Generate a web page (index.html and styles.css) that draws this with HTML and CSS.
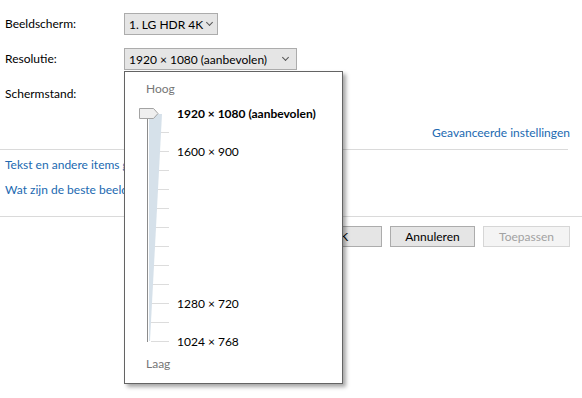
FILE: index.html
```html
<!DOCTYPE html>
<html lang="nl">
<head>
  <meta charset="UTF-8">
  <title>Schermresolutie</title>
  <link rel="stylesheet" href="styles.css">
</head>
<body>
  <div class="panel">
    <div class="settings">
      <label class="field-label">Beeldscherm:</label>
      <div class="combo combo-display"><span>1. LG HDR 4K</span><i class="chev"></i></div>

      <label class="field-label">Resolutie:</label>
      <div class="combo combo-res"><span>1920 × 1080 (aanbevolen)</span><i class="chev"></i></div>

      <label class="field-label">Schermstand:</label>
      <div class="combo combo-display"></div>
    </div>

    <div class="advanced">
      <a href="#">Geavanceerde instellingen</a>
    </div>
    <hr class="sep sep-short">

    <div class="links">
      <a href="#">Tekst en andere items groter of kleiner maken</a>
      <a href="#">Wat zijn de beste beeldscherminstellingen?</a>
    </div>
    <hr class="sep">

    <div class="actions">
      <button class="btn">OK</button>
      <button class="btn">Annuleren</button>
      <button class="btn" disabled>Toepassen</button>
    </div>

    <!-- open resolution slider dropdown -->
    <div class="res-popup">
      <div class="end-label">Hoog</div>
      <div class="slider">
        <svg class="track" width="34" height="247" viewBox="0 0 34 247">
          <g stroke="#dcdcdc" stroke-width="1">
            <line x1="14" y1="28.5" x2="32" y2="28.5"/>
            <line x1="14" y1="47.5" x2="32" y2="47.5"/>
            <line x1="14" y1="66.5" x2="32" y2="66.5"/>
            <line x1="14" y1="85.5" x2="32" y2="85.5"/>
            <line x1="14" y1="104.5" x2="32" y2="104.5"/>
            <line x1="14" y1="123.5" x2="32" y2="123.5"/>
            <line x1="14" y1="142.5" x2="32" y2="142.5"/>
            <line x1="14" y1="161.5" x2="32" y2="161.5"/>
            <line x1="14" y1="180.5" x2="32" y2="180.5"/>
            <line x1="14" y1="199.5" x2="32" y2="199.5"/>
            <line x1="14" y1="218.5" x2="32" y2="218.5"/>
            <line x1="14" y1="237.5" x2="32" y2="237.5"/>
          </g>
          <polygon points="12,10 25,10 13,237 12,237" fill="#d6e1ea"/>
          <line x1="10.5" y1="14" x2="10.5" y2="238" stroke="#8c8c8c" stroke-width="1"/>
          <polygon points="2.5,4.5 16.5,4.5 21,9.5 16.5,14.5 2.5,14.5" fill="#efefef" stroke="#a3a3a3" stroke-width="1"/>
        </svg>
        <ul class="steps">
          <li class="current">1920 × 1080 (aanbevolen)</li>
          <li></li>
          <li>1600 × 900</li>
          <li></li><li></li><li></li><li></li><li></li><li></li><li></li>
          <li>1280 × 720</li>
          <li></li>
          <li>1024 × 768</li>
        </ul>
      </div>
      <div class="end-label">Laag</div>
    </div>
  </div>
</body>
</html>
```

FILE: styles.css
```css
* { box-sizing: border-box; margin: 0; padding: 0; }
body {
  font-family: Lato, 'Noto Sans', sans-serif;
  font-size: 12px;
  color: #000;
  background: #fff;
  width: 582px;
  height: 398px;
  overflow: hidden;
}
a { color: #2169b1; text-decoration: none; }
.panel {
  position: relative;
  padding-top: 13px;
}

/* top form */
.settings {
  display: grid;
  grid-template-columns: 119px auto;
  row-gap: 13px;
  padding-left: 5px;
  align-items: center;
}
.field-label { line-height: 22px; }
.combo {
  height: 22px;
  display: flex;
  align-items: center;
  justify-content: space-between;
  gap: 4px;
  background: #e5e5e5;
  border: 1px solid #acacac;
  padding: 0 6px 0 4px;
  white-space: nowrap;
}
.combo-display { width: 94px; }
.combo-res { width: 173px; padding-right: 8px; }
.chev {
  flex-shrink: 0;
  width: 5px;
  height: 5px;
  border-right: 1px solid #555;
  border-bottom: 1px solid #555;
  transform: rotate(45deg);
  margin-top: -3px;
}

.advanced {
  text-align: right;
  padding-right: 12px;
  margin-top: 20px;
  line-height: 16px;
}
.sep {
  border: none;
  border-top: 1px solid #dadada;
}
.sep-short {
  width: 568px;
  margin-top: 8px;
}
.links {
  display: flex;
  flex-direction: column;
  gap: 9px;
  padding: 7px 0 18px 5px;
  line-height: 16px;
  white-space: nowrap;
}

.actions {
  display: flex;
  justify-content: flex-end;
  gap: 8px;
  padding: 9px 12px 0 0;
}
.btn {
  font: inherit;
  height: 21px;
  width: 85px;
  background: #e5e5e5;
  border: 1px solid #acacac;
  color: #000;
}
.btn:disabled {
  width: 87px;
  background: #f4f4f4;
  border-color: #d6d6d6;
  color: #a2a2a2;
}

/* resolution dropdown */
.res-popup {
  position: absolute;
  left: 124px;
  top: 71px;
  width: 219px;
  height: 313px;
  background: #fff;
  border: 1px solid #646464;
  box-shadow: 3px 3px 4px rgba(0, 0, 0, 0.35);
  padding: 9px 0 0 12px;
  display: flex;
  flex-direction: column;
}
.end-label {
  color: #767676;
  line-height: 16px;
  padding-left: 9px;
}
.slider {
  display: flex;
  margin: 7px 0 5px;
}
.steps {
  list-style: none;
  margin-left: 6px;
}
.steps li {
  height: 19px;
  line-height: 19px;
  white-space: nowrap;
}
.steps .current { font-weight: bold; }
```
